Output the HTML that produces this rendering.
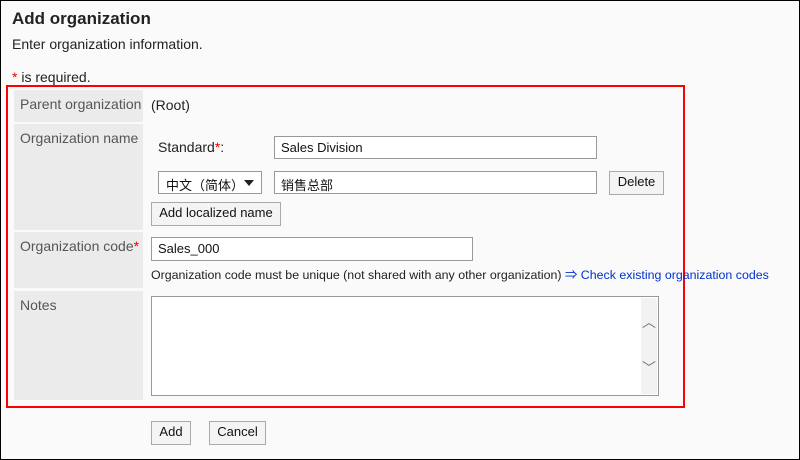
<!DOCTYPE html>
<html><head><meta charset="utf-8"><style>
body{margin:0;width:800px;height:460px;overflow:hidden;background:#fff;font-family:"Liberation Sans","Noto Sans CJK SC",sans-serif;}
#f{position:absolute;left:0;top:0;width:798px;height:458px;border:1px solid #000;background:#fafafa;}
.a{position:absolute;white-space:nowrap;}
.lb{position:absolute;left:13px;width:129px;background:#ebebeb;color:#555;font-size:14px;box-sizing:border-box;padding:6px 0 0 6px;}
.in{position:absolute;background:#fff;border:1px solid #999;box-sizing:border-box;font-size:13px;padding:3px 0 0 6px;color:#111;}
.bt{position:absolute;background:#f4f4f4;border:1px solid #aaa;box-sizing:border-box;font-size:13px;text-align:center;line-height:20px;color:#111;}
</style></head><body><div id="f">
<div class="a" style="left:11px;top:8px;font-size:17px;font-weight:bold;color:#222">Add organization</div>
<div class="a" style="left:11px;top:35px;font-size:14px;color:#222">Enter organization information.</div>
<div class="a" style="left:11px;top:68px;font-size:14px;color:#222"><span style="color:#e00">*</span> is required.</div>
<div class="a" style="left:5px;top:84px;width:675px;height:319px;border:2px solid #f00"></div>
<div class="lb" style="top:89px;height:32px">Parent organization</div>
<div class="lb" style="top:123px;height:106px">Organization name</div>
<div class="lb" style="top:231px;height:56px">Organization code<span style="color:#e00">*</span></div>
<div class="lb" style="top:290px;height:109px">Notes</div>
<div class="a" style="left:150px;top:96px;font-size:14px;color:#222">(Root)</div>
<div class="a" style="left:157px;top:138px;font-size:14px;color:#222">Standard<span style="color:#e00">*</span>:</div>
<div class="in" style="left:273px;top:135px;width:323px;height:23px">Sales Division</div>
<div class="in" style="left:157px;top:170px;width:104px;height:23px;padding-left:7px">中文（简体）<span style="position:absolute;right:7px;top:8px;border:5px solid transparent;border-top:6px solid #222;border-bottom:0"></span></div>
<div class="in" style="left:273px;top:170px;width:323px;height:23px">销售总部</div>
<div class="bt" style="left:608px;top:170px;width:55px;height:24px">Delete</div>
<div class="bt" style="left:150px;top:201px;width:130px;height:24px">Add localized name</div>
<div class="in" style="left:150px;top:236px;width:322px;height:24px">Sales_000</div>
<div class="a" style="left:150px;top:264px;font-size:12.4px;color:#222">Organization code must be unique (not shared with any other organization) <span style="color:#0033cc">⇒ Check existing organization codes</span></div>
<div class="in" style="left:150px;top:295px;width:508px;height:100px"><div style="position:absolute;right:1px;top:1px;width:16px;bottom:1px;background:#f2f2f2;color:#777;font-size:14px;text-align:center"><div style="position:absolute;top:14px;width:16px">︿</div><div style="position:absolute;bottom:16px;width:16px">﹀</div></div></div>
<div class="bt" style="left:150px;top:420px;width:40px;height:24px">Add</div>
<div class="bt" style="left:208px;top:420px;width:57px;height:24px">Cancel</div>
</div></body></html>
